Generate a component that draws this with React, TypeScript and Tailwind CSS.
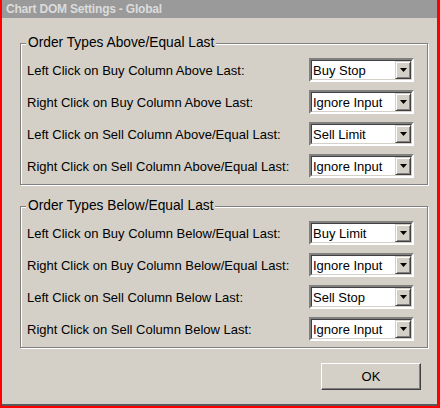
import React from "react";

const font = { fontFamily: '"Liberation Sans", Arial, sans-serif' };

type Row = { label: string; value: string };

const above: Row[] = [
  { label: "Left Click on Buy Column Above Last:", value: "Buy Stop" },
  { label: "Right Click on Buy Column Above Last:", value: "Ignore Input" },
  { label: "Left Click on Sell Column Above/Equal Last:", value: "Sell Limit" },
  { label: "Right Click on Sell Column Above/Equal Last:", value: "Ignore Input" },
];

const below: Row[] = [
  { label: "Left Click on Buy Column Below/Equal Last:", value: "Buy Limit" },
  { label: "Right Click on Buy Column Below/Equal Last:", value: "Ignore Input" },
  { label: "Left Click on Sell Column Below Last:", value: "Sell Stop" },
  { label: "Right Click on Sell Column Below Last:", value: "Ignore Input" },
];

function Combo({ value }: { value: string }) {
  return (
    <div className="flex h-[24px] w-[105px] shrink-0 border-2 border-t-[#808080] border-l-[#808080] border-b-white border-r-white">
      <div className="flex flex-1 border border-t-[#404040] border-l-[#404040] border-b-[#d4d0c8] border-r-[#d4d0c8] bg-white">
        <div className="flex flex-1 items-center pl-[1px] text-[13px] text-black leading-none">{value}</div>
        <div className="flex w-[16px] items-center justify-center border border-t-[#d4d0c8] border-l-[#d4d0c8] border-b-[#404040] border-r-[#404040] bg-[#d4d0c8] shadow-[inset_1px_1px_0_#fff,inset_-1px_-1px_0_#808080]">
          <svg width="7" height="4" viewBox="0 0 7 4">
            <path d="M0 0h7L3.5 4z" fill="#000" />
          </svg>
        </div>
      </div>
    </div>
  );
}

function Group({ title, rows }: { title: string; rows: Row[] }) {
  return (
    <div className="relative border border-[#808080] shadow-[1px_1px_0_#fff,inset_1px_1px_0_#fff] pl-[6px] pr-[13px] pt-[14px] pb-[6px]">
      <span className="absolute left-[5px] top-[-9px] bg-[#d4d0c8] px-[2px] text-[13.75px] leading-[16px] text-black">
        {title}
      </span>
      <div className="flex flex-col gap-[8px]">
        {rows.map((r, i) => (
          <div key={i} className="flex items-center justify-between">
            <span className="text-[13px] leading-[16px] text-black pt-[2px]">{r.label}</span>
            <Combo value={r.value} />
          </div>
        ))}
      </div>
    </div>
  );
}

export default function App() {
  return (
    <div className="w-[440px] h-[408px] bg-[#ff0000] pl-[2px] pr-[3px] pb-[2px]" style={font}>
      <div className="flex h-full flex-col bg-[#d4d0c8] border-b-2 border-[#5a5a5a]">
        <div className="flex h-[18px] items-center bg-[#9a9a9a] pl-[4px] text-[12px] font-bold tracking-[-0.2px] text-[#dcdcdc]">
          Chart DOM Settings - Global
        </div>
        <div className="flex flex-col pl-[18px] pr-[9px] pt-[25px]">
          <Group title="Order Types Above/Equal Last" rows={above} />
          <div className="h-[21px]" />
          <Group title="Order Types Below/Equal Last" rows={below} />
          <div className="flex justify-end pt-[15px] pr-[7px]">
            <button className="h-[27px] w-[100px] border border-t-white border-l-white border-b-[#404040] border-r-[#404040] bg-[#d4d0c8] text-[13px] text-black shadow-[inset_-1px_-1px_0_#808080]">
              OK
            </button>
          </div>
        </div>
      </div>
    </div>
  );
}
